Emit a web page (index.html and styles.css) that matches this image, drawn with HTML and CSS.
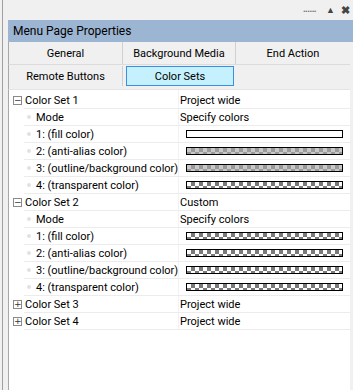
FILE: index.html
```html
<!DOCTYPE html>
<html lang="en">
<head>
    <meta charset="UTF-8">
    <title>Menu Page Properties</title>
    <link rel="stylesheet" href="styles.css">
</head>
<body>
<div class="window">
    <div class="topbar">
        <span class="grip">&#8226;&#8226;&#8226;&#8226;&#8226;&#8226;</span>
        <span class="pin">&#9650;</span>
        <span class="close">&#10006;</span>
    </div>
    <div class="panel">
        <div class="title">Menu Page Properties</div>
        <div class="tabs">
            <div class="tab">General</div>
            <div class="tab">Background Media</div>
            <div class="tab">End Action</div>
        </div>
        <div class="tabs second">
            <div class="tab">Remote Buttons</div>
            <div class="tab active">Color Sets</div>
            <div class="tab"></div>
        </div>
        <div class="tree">
            <div class="row group"><span class="name"><span class="exp">&minus;</span>Color Set 1</span><span class="val">Project wide</span></div>
            <div class="row"><span class="name"><span class="dot"></span>Mode</span><span class="val">Specify colors</span></div>
            <div class="row"><span class="name"><span class="dot"></span>1: (fill color)</span><span class="val"><span class="bar white"></span></span></div>
            <div class="row"><span class="name"><span class="dot"></span>2: (anti-alias color)</span><span class="val"><span class="bar soft"></span></span></div>
            <div class="row"><span class="name"><span class="dot"></span>3: (outline/background color)</span><span class="val"><span class="bar soft"></span></span></div>
            <div class="row"><span class="name"><span class="dot"></span>4: (transparent color)</span><span class="val"><span class="bar check"></span></span></div>
            <div class="row group"><span class="name"><span class="exp">&minus;</span>Color Set 2</span><span class="val">Custom</span></div>
            <div class="row"><span class="name"><span class="dot"></span>Mode</span><span class="val">Specify colors</span></div>
            <div class="row"><span class="name"><span class="dot"></span>1: (fill color)</span><span class="val"><span class="bar check"></span></span></div>
            <div class="row"><span class="name"><span class="dot"></span>2: (anti-alias color)</span><span class="val"><span class="bar check"></span></span></div>
            <div class="row"><span class="name"><span class="dot"></span>3: (outline/background color)</span><span class="val"><span class="bar check"></span></span></div>
            <div class="row"><span class="name"><span class="dot"></span>4: (transparent color)</span><span class="val"><span class="bar check"></span></span></div>
            <div class="row group"><span class="name"><span class="exp">+</span>Color Set 3</span><span class="val">Project wide</span></div>
            <div class="row group"><span class="name"><span class="exp">+</span>Color Set 4</span><span class="val">Project wide</span></div>
        </div>
    </div>
</div>
</body>
</html>
```
FILE: styles.css
```css
body {
    margin: 0;
    background: #f0f0f0;
    font-family: Roboto, "Liberation Sans", sans-serif;
    font-size: 11px;
    color: #000;
}
.window {
    height: 390px;
    display: flex;
    flex-direction: column;
    border-left: 1px solid #a0a0a0;
    margin-left: 2px;
}
.topbar {
    height: 20px;
    display: flex;
    align-items: center;
    justify-content: flex-end;
    gap: 6px;
    padding-right: 3px;
    color: #555;
}
.grip {
    font-size: 8px;
    letter-spacing: -0.5px;
    color: #777;
    margin-right: 4px;
    margin-top: 2px;
}
.pin {
    font-size: 9px;
    color: #444;
}
.close {
    font-size: 11px;
    font-weight: bold;
    color: #444;
}
.panel {
    flex: 1;
    margin-left: 5px;
    display: flex;
    flex-direction: column;
}
.title {
    height: 22px;
    line-height: 22px;
    background: #9cb5d2;
    padding-left: 5px;
    font-size: 12px;
    color: #000;
}
.tabs {
    display: grid;
    grid-template-columns: 114px 113px 1fr;
    height: 23px;
    border-left: 1px solid #a8a8a8;
    border-bottom: 1px solid #dcdcdc;
    margin-right: 3px;
    box-sizing: border-box;
}
.tab {
    display: flex;
    align-items: center;
    justify-content: center;
    border-right: 1px solid #d0d0d0;
}
.tab:last-child {
    border-right: none;
}
.second {
    height: 24px;
    border-bottom: none;
}
.second .tab {
    margin: 1px 0 3px;
}
.tab.active {
    background: #c4f1fd;
    border: 1px solid #3c8fe0;
    margin: 1px 2px 3px 3px;
}
.tree {
    flex: 1;
    background: #fff;
    border-left: 1px solid #a8a8a8;
    border-top: 1px solid #e4e4e4;
    margin-right: 3px;
    padding-top: 2px;
    background-image: linear-gradient(#f2f2f2, #f2f2f2);
    background-size: 1px 240px;
    background-position: 169px 0;
    background-repeat: no-repeat;
}
.row {
    display: grid;
    grid-template-columns: 154px 1fr;
    height: 17px;
    align-items: center;
    margin-left: 15px;
    border-bottom: 1px solid #ececec;
    box-sizing: border-box;
}
.name {
    display: flex;
    align-items: center;
    white-space: nowrap;
    padding-left: 12px;
}
.group .name {
    margin-left: -15px;
    padding-left: 4px;
}
.exp {
    flex-shrink: 0;
    width: 7px;
    height: 7px;
    border: 1px solid #8a8a8a;
    font-size: 9px;
    line-height: 7px;
    text-align: center;
    color: #333;
    margin-right: 3px;
    font-family: "DejaVu Sans", sans-serif;
}
.dot {
    flex-shrink: 0;
    width: 4px;
    height: 4px;
    border-radius: 50%;
    background: #dde3ea;
    margin-right: 5px;
    margin-left: -9px;
}
.val {
    padding-left: 2px;
    display: flex;
    align-items: center;
}
.bar {
    display: block;
    width: 155px;
    height: 6px;
    margin-left: 6px;
    border: 1px solid #000;
    background-color: #fff;
}
.soft {
    background-color: #c8c8c8;
    background-image:
        linear-gradient(45deg, #9a9a9a 25%, transparent 25%, transparent 75%, #9a9a9a 75%),
        linear-gradient(45deg, #9a9a9a 25%, transparent 25%, transparent 75%, #9a9a9a 75%);
    background-size: 8px 8px;
    background-position: 0 0, 4px 4px;
}
.check {
    background-color: #fff;
    background-image:
        linear-gradient(45deg, #7a7a7a 25%, transparent 25%, transparent 75%, #7a7a7a 75%),
        linear-gradient(45deg, #7a7a7a 25%, transparent 25%, transparent 75%, #7a7a7a 75%);
    background-size: 8px 8px;
    background-position: 0 0, 4px 4px;
}
```
